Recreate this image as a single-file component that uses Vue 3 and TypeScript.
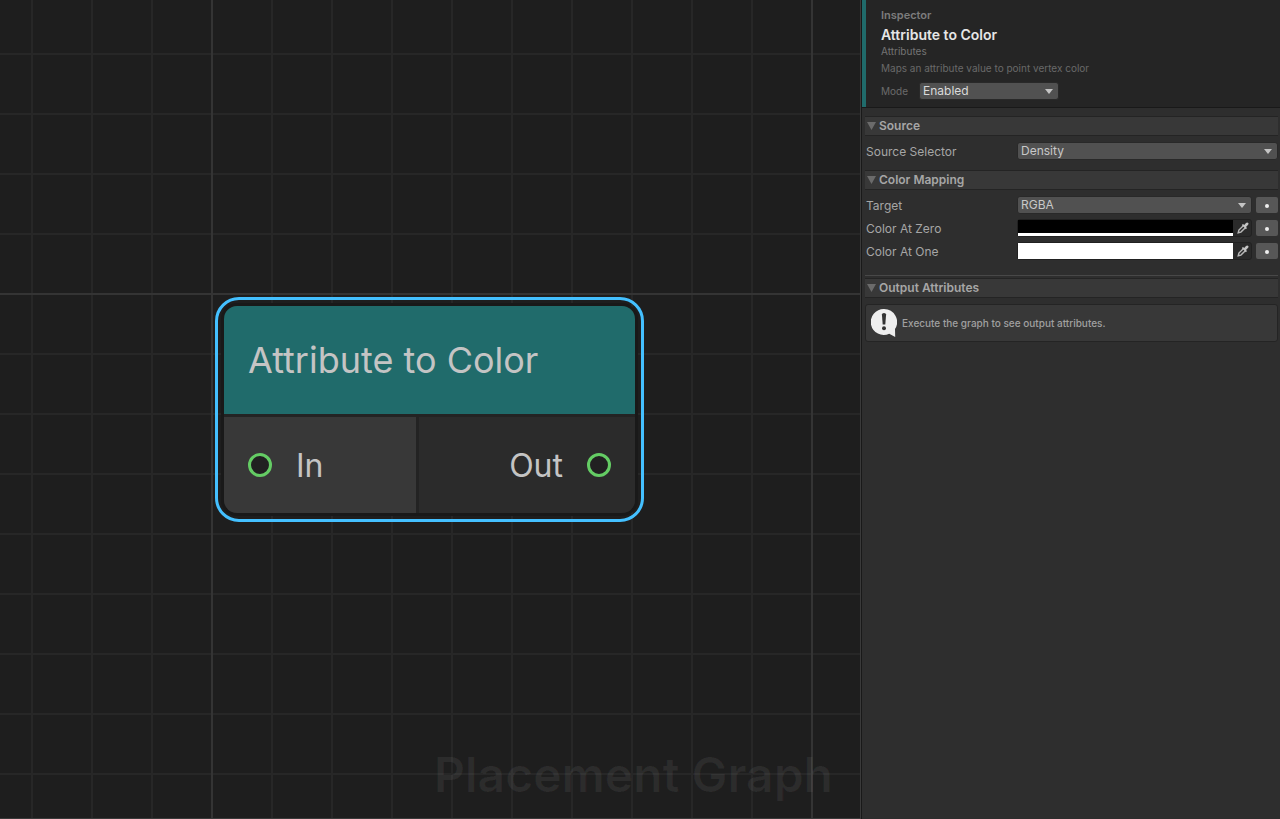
<script setup lang="ts">
import { reactive, ref } from 'vue'

interface ColorRow {
  id: string
  label: string
  value: string
  alpha: number
}

const mode = ref('Enabled')
const source = ref('Density')
const target = ref('RGBA')
const colors = reactive<ColorRow[]>([
  { id: 'color-zero', label: 'Color At Zero', value: '#000000', alpha: 100 },
  { id: 'color-one', label: 'Color At One', value: '#ffffff', alpha: 100 },
])
const open = reactive({ source: true, mapping: true, output: true })
</script>

<template>
  <div class="editor">
    <main class="canvas">
      <div class="watermark">Placement Graph</div>
      <article class="node">
        <div class="node-body">
          <h2 class="node-title">Attribute to Color</h2>
          <div class="ports">
            <div class="port port-in"><span class="pin"></span><span>In</span></div>
            <div class="port port-out"><span>Out</span><span class="pin"></span></div>
          </div>
        </div>
      </article>
    </main>

    <aside class="inspector">
      <header class="summary">
        <div class="eyebrow">Inspector</div>
        <h1 class="name">Attribute to Color</h1>
        <div class="category">Attributes</div>
        <p class="description">Maps an attribute value to point vertex color</p>
        <div class="mode">
          <label for="mode">Mode</label>
          <div class="dropdown">
            <select id="mode" v-model="mode"><option>Enabled</option><option>Disabled</option></select>
            <svg class="caret" viewBox="0 0 8 5"><path d="M0 0h8L4 5z" /></svg>
          </div>
        </div>
      </header>

      <section class="group">
        <button class="group-head" :aria-expanded="open.source" @click="open.source = !open.source">
          <svg class="fold" viewBox="0 0 9 8"><path d="M0 0h9L4.500 8z" /></svg>Source
        </button>
        <div v-show="open.source" class="rows">
          <div class="row">
            <label for="source">Source Selector</label>
            <div class="dropdown">
              <select id="source" v-model="source"><option>Density</option></select>
              <svg class="caret" viewBox="0 0 8 5"><path d="M0 0h8L4 5z" /></svg>
            </div>
          </div>
        </div>
      </section>

      <section class="group">
        <button class="group-head" :aria-expanded="open.mapping" @click="open.mapping = !open.mapping">
          <svg class="fold" viewBox="0 0 9 8"><path d="M0 0h9L4.500 8z" /></svg>Color Mapping
        </button>
        <div v-show="open.mapping" class="rows mapping">
          <div class="row">
            <label for="target">Target</label>
            <div class="dropdown">
              <select id="target" v-model="target"><option>RGBA</option><option>RGB</option></select>
              <svg class="caret" viewBox="0 0 8 5"><path d="M0 0h8L4 5z" /></svg>
            </div>
            <button class="more" aria-label="Target options"><span class="dot"></span></button>
          </div>
          <div v-for="c in colors" :key="c.id" class="row">
            <label :for="c.id">{{ c.label }}</label>
            <div class="color-field">
              <div class="swatch">
                <input :id="c.id" v-model="c.value" type="color" />
                <span class="alpha" :style="{ width: c.alpha + '%' }"></span>
              </div>
              <button class="picker" :aria-label="'Pick ' + c.label">
                <svg viewBox="0 0 12 12">
                  <path class="shaft" d="M6.300 3.700L1.900 8.100L1.200 10.800L3.900 10.100L8.300 5.700" />
                  <path class="bulb" d="M4.800 3.100L6 2L7.200 3L9 1.100Q10.100 0 11.300 .900Q12 2 10.900 3.100L9 4.900L10 6L8.900 7.200Z" />
                </svg>
              </button>
            </div>
            <button class="more" :aria-label="c.label + ' options'"><span class="dot"></span></button>
          </div>
        </div>
      </section>

      <hr class="rule" />

      <section class="group">
        <button class="group-head" :aria-expanded="open.output" @click="open.output = !open.output">
          <svg class="fold" viewBox="0 0 9 8"><path d="M0 0h9L4.500 8z" /></svg>Output Attributes
        </button>
        <div v-show="open.output" class="help">
          <svg class="info" viewBox="0 0 26 28">
            <path class="bubble" d="M13 0a13 13 0 0 1 11 20l.200 8l-6-3.200A13 13 0 1 1 13 0z" />
            <path class="mark" d="M10.900 5.500q0-1.500 2.100-1.500t2.100 1.500l-.800 10h-2.600z" />
            <circle class="mark" cx="13" cy="19.300" r="2" />
          </svg>
          <span>Execute the graph to see output attributes.</span>
        </div>
      </section>
    </aside>
  </div>
</template>

<style>
body {
  margin: 0;
  background: #191919;
}
</style>

<style scoped>
.editor {
  display: flex;
  gap: 1px;
  min-height: 100vh;
  font-family: Inter, "Liberation Sans", sans-serif;
  color: #a6a6a6;
  background: #191919;
}
.editor * {
  box-sizing: border-box;
}
button,
select {
  margin: 0;
  border: 0;
  font: inherit;
  color: inherit;
}

.canvas {
  position: relative;
  flex: 1;
  overflow: hidden;
  border-right: 1px solid #3a3a3a;
  border-bottom: 1px solid #3a3a3a;
  background-color: #1e1e1e;
  background-image:
    linear-gradient(90deg, #343434 2px, transparent 2px),
    linear-gradient(#343434 2px, transparent 2px),
    linear-gradient(90deg, #272727 2px, transparent 2px),
    linear-gradient(#272727 2px, transparent 2px);
  background-size: 600px 600px, 600px 600px, 60px 60px, 60px 60px;
  background-position: 211px 0, 0 293px, 31px 0, 0 53px;
}
.watermark {
  position: absolute;
  right: 27px;
  bottom: 14px;
  font-size: 48px;
  line-height: 58px;
  font-weight: 600;
  color: rgba(255, 255, 255, 0.06);
}
.node {
  position: absolute;
  left: 215px;
  top: 297px;
  width: 429px;
  padding: 3px;
  border: 3px solid #44c0ff;
  border-radius: 24px;
}
.node-body {
  border: 3px solid #191919;
  border-radius: 16px;
  overflow: hidden;
  color: #c4c4c4;
}
.node-title {
  margin: 0;
  padding: 0 24px;
  font-size: 36px;
  line-height: 108px;
  font-weight: 400;
  background: #206b6b;
  white-space: nowrap;
}
.ports {
  display: flex;
  gap: 3px;
  padding-top: 3px;
  font-size: 32px;
  font-weight: 400;
  background: #232323;
}
.port {
  display: flex;
  align-items: center;
  gap: 24px;
  height: 96px;
  padding: 0 24px;
}
.port-in {
  flex: 0 0 192px;
  background: #383838;
}
.port-out {
  flex: 1;
  justify-content: flex-end;
  background: #2b2b2b;
}
.pin {
  width: 24px;
  height: 24px;
  border: 3px solid #64cc64;
  border-radius: 50%;
  background: #212121;
}

.inspector {
  flex: 0 0 418px;
  font-size: 12px;
  background: #2e2e2e;
}
.summary {
  margin-bottom: 9px;
  padding: 8px 12px 7px 15px;
  border-left: 4px solid #206b6b;
  box-shadow: 0 1px #191919;
  background: #252525;
}
.eyebrow {
  font-size: 11px;
  line-height: 14px;
  font-weight: 600;
  color: #7c7c7c;
}
.name {
  margin: 4px 0 0;
  font-size: 14px;
  line-height: 18px;
  font-weight: 600;
  color: #e6e6e6;
}
.category {
  font-size: 10px;
  line-height: 14px;
  color: #747474;
}
.description {
  margin: 3px 0 7px;
  font-size: 10px;
  line-height: 14px;
  color: #696969;
}
.mode {
  display: flex;
  align-items: center;
  font-size: 10px;
  color: #6b6b6b;
}
.mode label {
  width: 38px;
}
.mode .dropdown {
  flex: 0 0 140px;
}

.dropdown {
  position: relative;
  flex: 1;
  height: 18px;
  border: 1px solid #292929;
  border-radius: 3px;
  background: #515151;
}
.dropdown select {
  display: block;
  width: 100%;
  height: 16px;
  padding: 0 16px 0 3px;
  appearance: none;
  background: transparent;
  font-size: 12px;
  line-height: 16px;
  color: #c8c8c8;
  outline: 0;
}
.mode .dropdown select {
  color: #dadada;
}
.caret {
  position: absolute;
  right: 5px;
  top: 6px;
  width: 8px;
  height: 5px;
  fill: #c4c4c4;
  pointer-events: none;
}

.group {
  padding: 0 2px 0 3px;
}
.group-head {
  display: flex;
  align-items: center;
  gap: 3px;
  width: 100%;
  height: 20px;
  padding: 0 2px;
  border-top: 1px solid #242424;
  border-bottom: 1px solid #242424;
  background: #383838;
  font-weight: 600;
  line-height: 18px;
  text-align: left;
}
.fold {
  width: 9px;
  height: 8px;
  fill: #6b6b6b;
}
.rows {
  display: grid;
  gap: 5px;
  padding: 6px 0 10px 1px;
}
.mapping {
  padding-bottom: 15px;
}
.row {
  display: flex;
  align-items: center;
  height: 18px;
}
.row > label {
  flex: 0 0 151px;
}
.more {
  display: grid;
  place-items: center;
  flex: 0 0 22px;
  height: 16px;
  margin-left: 4px;
  padding: 1px 0 0;
  border-radius: 2px;
  background: #575757;
}
.dot {
  width: 4px;
  height: 4px;
  border-radius: 2px;
  background: #eeeeee;
}
.color-field {
  display: flex;
  flex: 1;
  height: 18px;
  border: 1px solid #212121;
  border-radius: 3px;
  background: #2a2a2a;
}
.swatch {
  display: flex;
  flex: 1;
  flex-direction: column;
  background: #000000;
}
.swatch input {
  flex: 1;
  width: 100%;
  min-height: 0;
  padding: 0;
  border: 0;
  appearance: none;
  background: none;
}
.swatch input::-webkit-color-swatch-wrapper {
  padding: 0;
}
.swatch input::-webkit-color-swatch {
  border: 0;
  border-radius: 0;
}
.alpha {
  height: 3px;
  background: #ffffff;
}
.picker {
  display: grid;
  place-items: center end;
  width: 18px;
  padding: 0 2px 0 0;
  background: transparent;
}
.picker svg {
  width: 12px;
  height: 12px;
}
.shaft {
  fill: none;
  stroke: #b8b8b8;
  stroke-width: 1.4;
}
.bulb {
  fill: #c4c4c4;
}
.rule {
  height: 1px;
  margin: 0 2px 2px 3px;
  border: 0;
  background: #484848;
}
.help {
  display: flex;
  align-items: center;
  gap: 5px;
  height: 38px;
  margin-top: 6px;
  padding: 0 5px;
  border: 1px solid #242424;
  border-radius: 3px;
  background: #383838;
  font-size: 10px;
  font-weight: 500;
  color: #a0a0a0;
}
.info {
  width: 26px;
  height: 28px;
}
.bubble {
  fill: #eeeeee;
}
.mark {
  fill: #333333;
}
</style>
